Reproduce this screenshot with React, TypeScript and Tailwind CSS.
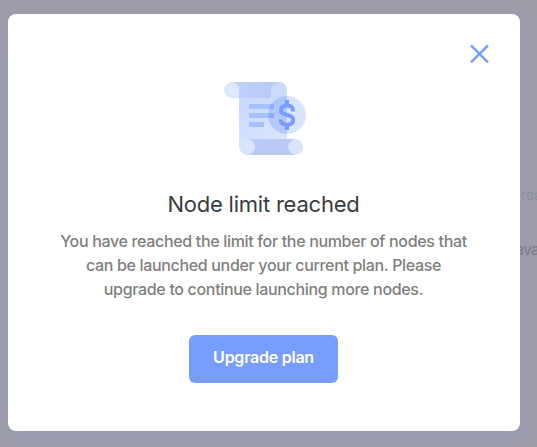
function ReceiptIcon() {
  return (
    <svg width="84" height="76" viewBox="0 0 84 76" fill="none" aria-hidden="true" className="ml-1">
      <defs>
        <linearGradient id="paper" x1="15" y1="10" x2="60" y2="74" gradientUnits="userSpaceOnUse">
          <stop stopColor="#c8d6fe" />
          <stop offset="1" stopColor="#dee7fe" />
        </linearGradient>
        <linearGradient id="roll" x1="6" y1="0" x2="50" y2="0" gradientUnits="userSpaceOnUse">
          <stop stopColor="#c3d2fc" />
          <stop offset="1" stopColor="#b7c9f8" />
        </linearGradient>
      </defs>
      <path d="M8 1H55Q63 1 63 10V74H25Q15 74 15 62V10Z" fill="url(#paper)" />
      <path d="M8 1H55Q47 2 47 10V17H8Z" fill="url(#roll)" />
      <path d="M8 1Q15 2 15 9V17H8A8 8 0 0 1 8 1Z" fill="#dfe8fe" />
      <path d="M23 58H71V74H23Z" fill="#b9caf6" />
      <path d="M15 58H23A8 8 0 0 1 23 74Q15 73 15 63Z" fill="#dae4fe" />
      <path d="M71 58A8 8 0 0 1 71 74Q64 72 64 66Q64 60 71 58Z" fill="#dae4fe" />
      <path d="M25 25.5H50M25 34.5H50M25 43.5H40" stroke="#a9c1fa" strokeWidth="5" />
      <circle cx="63" cy="34" r="19" fill="#779eff" fillOpacity=".28" />
      <path d="M63 15V53A19 19 0 0 1 63 15Z" fill="#779eff" fillOpacity=".12" />
      <path d="M45.5 26.5A19 19 0 0 1 47 23H50V28H45ZM44.2 32H50V37H44.2Z" fill="#8baaf6" fillOpacity=".7" />
      <path d="M63 19V24M63 44V49" stroke="#779eff" strokeWidth="4" />
      <path d="M69 30.5V29.5C69 26.5 67 24.5 63 24.5S57 26.3 57 29.3C57 32.2 59 33.1 63 34S69.2 36.2 69.2 39S67 43.8 63 43.8S56.8 41.8 56.8 38.5" stroke="#779eff" strokeWidth="4" />
    </svg>
  );
}

export default function App() {
  return (
    <div className="relative h-[447px] w-[537px] overflow-hidden bg-[#9e9ca7] pt-[14px] pl-2 font-['Inter','Liberation_Sans',sans-serif]">
      <span className="absolute top-[184px] left-[521px] text-[14px] text-[#8f8e98]">rea</span>
      <span className="absolute top-[237px] left-[515px] text-[16px] tracking-[-0.8px] text-[#7b7a84]">ava</span>
      <main className="relative flex h-[417px] w-[512px] flex-col items-center rounded-lg bg-white pt-[67px] text-center shadow-[0_8px_24px_rgba(119,158,255,0.2)]">
        <button aria-label="Close" className="absolute top-[30px] right-[31px]">
          <svg width="19" height="19" viewBox="0 0 19 19" fill="none" stroke="#779eff" strokeWidth="2.5" className="block">
            <path d="M1 1.3l17 17M18 1.3l-17 17" />
          </svg>
        </button>
        <ReceiptIcon />
        <h1 className="mt-[31px] mr-px text-[22px] leading-8 tracking-[-0.22px] text-[#3a3c40]">Node limit reached</h1>
        <p className="mt-[9px] mr-px text-[16px] leading-6 font-medium tracking-[-0.33px] whitespace-nowrap text-[#808080]">
          You have reached the limit for the number of nodes that
          <br />
          can be launched under your current plan. Please
          <br />
          upgrade to continue launching more nodes.
        </p>
        <button className="mt-[34px] mr-[2px] h-12 w-[149px] rounded-md bg-[#779eff] pb-[4px] pl-px text-[16px] font-semibold tracking-[-0.25px] text-white">
          Upgrade plan
        </button>
      </main>
    </div>
  );
}
